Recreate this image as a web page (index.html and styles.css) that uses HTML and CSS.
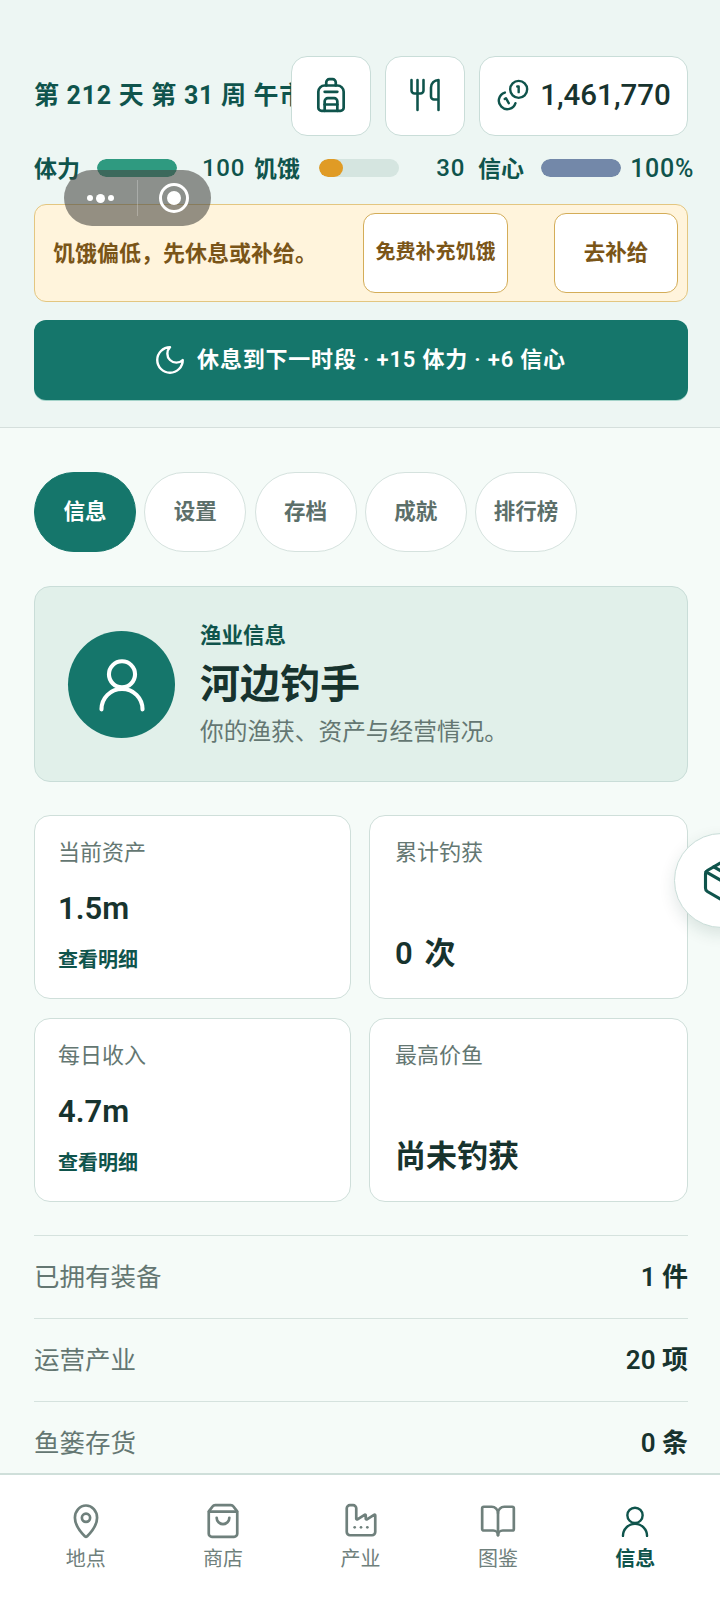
FILE: index.html
```html
<!DOCTYPE html>
<html lang="zh-CN">
<head>
  <meta charset="UTF-8" />
  <meta name="viewport" content="width=device-width, initial-scale=1.0"/>
  <title>河边钓手</title>
  <link rel="stylesheet" href="styles.css">
</head>
<body>
  <div class="app">
    <header class="top">
      <div class="top-row">
        <div class="day-title">第 212 天 第 31 周 午市</div>
        <button class="icon-btn">
          <svg class="ico ico-38" viewBox="0 0 24 24"><path d="M4 10a4 4 0 0 1 4-4h8a4 4 0 0 1 4 4v10a2 2 0 0 1-2 2H6a2 2 0 0 1-2-2z"/><path d="M8 10h8"/><path d="M8 18h8"/><path d="M8 22v-6a2 2 0 0 1 2-2h4a2 2 0 0 1 2 2v6"/><path d="M9 6V4a2 2 0 0 1 2-2h2a2 2 0 0 1 2 2v2"/></svg>
        </button>
        <button class="icon-btn">
          <svg class="ico ico-36" viewBox="0 0 24 24"><path d="M3 2v7c0 1.1.9 2 2 2h4a2 2 0 0 0 2-2V2"/><path d="M7 2v20"/><path d="M21 15V2a5 5 0 0 0-5 5v6c0 1.1.9 2 2 2h3Zm0 0v7"/></svg>
        </button>
        <div class="money">
          <svg class="ico ico-34" viewBox="0 0 24 24"><path d="M13.744 17.736a6 6 0 1 1-7.48-7.48"/><path d="M15 6h1v4"/><path d="m6.134 14.768.866-.5 2 3.464"/><circle cx="16" cy="8" r="6"/></svg>
          <span>1,461,770</span>
        </div>
      </div>

      <div class="stats">
        <span class="stat-name">体力</span>
        <span class="bar"><i class="fill fill-green"></i></span>
        <span class="stat-num num-a">100</span>
        <span class="stat-name">饥饿</span>
        <span class="bar bar-b"><i class="fill fill-orange"></i></span>
        <span class="stat-num num-b">30</span>
        <span class="stat-name">信心</span>
        <span class="bar"><i class="fill fill-blue"></i></span>
        <span class="stat-num num-c">100%</span>
      </div>

      <div class="warn">
        <p>饥饿偏低，先休息或补给。</p>
        <button class="warn-btn warn-free">免费补充饥饿</button>
        <button class="warn-btn warn-go">去补给</button>
      </div>

      <button class="rest">
        <svg class="ico ico-34" viewBox="0 0 24 24"><path d="M12 3a6 6 0 0 0 9 9 9 9 0 1 1-9-9Z"/></svg>
        <span>休息到下一时段 · +15 体力 · +6 信心</span>
      </button>
    </header>

    <main class="content">
      <nav class="tabs">
        <button class="tab active">信息</button>
        <button class="tab">设置</button>
        <button class="tab">存档</button>
        <button class="tab">成就</button>
        <button class="tab">排行榜</button>
      </nav>

      <section class="hero">
        <div class="avatar">
          <svg class="ico ico-58" viewBox="0 0 24 24"><circle cx="12" cy="8" r="5.4"/><path d="M3.5 22.5a8.5 8.5 0 0 1 17 0"/></svg>
        </div>
        <div class="hero-text">
          <div class="hero-kicker">渔业信息</div>
          <h1>河边钓手</h1>
          <p>你的渔获、资产与经营情况。</p>
        </div>
      </section>

      <section class="cards">
        <div class="card">
          <div class="card-label">当前资产</div>
          <div class="card-value">1.5m</div>
          <a class="card-link">查看明细</a>
        </div>
        <div class="card">
          <div class="card-label">累计钓获</div>
          <div class="card-value push">0 次</div>
        </div>
        <div class="card">
          <div class="card-label">每日收入</div>
          <div class="card-value">4.7m</div>
          <a class="card-link">查看明细</a>
        </div>
        <div class="card">
          <div class="card-label">最高价鱼</div>
          <div class="card-value push">尚未钓获</div>
        </div>
      </section>

      <section class="list">
        <div class="list-row"><span>已拥有装备</span><b>1 件</b></div>
        <div class="list-row"><span>运营产业</span><b>20 项</b></div>
        <div class="list-row"><span>鱼篓存货</span><b>0 条</b></div>
      </section>
    </main>

    <footer class="tabbar">
      <a class="tabbar-item">
        <svg class="ico ico-38" viewBox="0 0 24 24"><path d="M19 10c0 4.993-4.8 10.193-6.4 11.799a1 1 0 0 1-1.2 0C9.8 20.193 5 14.993 5 10a7 7.8 0 0 1 14 0"/><circle cx="12" cy="10" r="2.6"/></svg>
        <span>地点</span>
      </a>
      <a class="tabbar-item">
        <svg class="ico ico-38" viewBox="0 0 24 24"><path d="M16 10a4 4 0 0 1-8 0"/><path d="M3.103 6.034h17.794"/><path d="M3.4 5.467a2 2 0 0 0-.4 1.2V20a2 2 0 0 0 2 2h14a2 2 0 0 0 2-2V6.667a2 2 0 0 0-.4-1.2l-2-2.667A2 2 0 0 0 17 2H7a2 2 0 0 0-1.6.8z"/></svg>
        <span>商店</span>
      </a>
      <a class="tabbar-item">
        <svg class="ico ico-38" viewBox="0 0 24 24"><path d="M12 16h.01"/><path d="M16 16h.01"/><path d="M3 19a2 2 0 0 0 2 2h14a2 2 0 0 0 2-2V8.5a.5.5 0 0 0-.769-.422l-4.462 2.844A.5.5 0 0 1 15 10.5v-2a.5.5 0 0 0-.769-.422L9.77 10.922A.5.5 0 0 1 9 10.5V4a2 2 0 0 0-2-2H5a2 2 0 0 0-2 2z"/><path d="M8 16h.01"/></svg>
        <span>产业</span>
      </a>
      <a class="tabbar-item">
        <svg class="ico ico-38" viewBox="0 0 24 24"><path d="M12 7v14"/><path d="M3 18a1 1 0 0 1-1-1V4a1 1 0 0 1 1-1h5a4 4 0 0 1 4 4 4 4 0 0 1 4-4h5a1 1 0 0 1 1 1v13a1 1 0 0 1-1 1h-6a3 3 0 0 0-3 3 3 3 0 0 0-3-3z"/></svg>
        <span>图鉴</span>
      </a>
      <a class="tabbar-item current">
        <span class="user-box"><svg class="ico ico-34" viewBox="0 0 24 24"><circle cx="12" cy="8" r="5.4"/><path d="M3.5 22.5a8.5 8.5 0 0 1 17 0"/></svg></span>
        <span>信息</span>
      </a>
    </footer>

    <!-- floating bits that sit over the page -->
    <div class="capsule">
      <span class="dots"><i></i><i class="big"></i><i></i></span>
      <span class="capsule-line"></span>
      <span class="target"><i></i></span>
    </div>
    <button class="fab">
      <svg class="ico ico-44" viewBox="0 0 24 24"><path d="M11 21.73a2 2 0 0 0 2 0l7-4A2 2 0 0 0 21 16V8a2 2 0 0 0-1-1.73l-7-4a2 2 0 0 0-2 0l-7 4A2 2 0 0 0 3 8v8a2 2 0 0 0 1 1.73z"/><path d="M12 22V12"/><path d="M3.29 7 12 12l8.71-5"/><path d="m7.5 4.27 9 5.15"/></svg>
    </button>
  </div>
</body>
</html>
```

FILE: styles.css
```css
* {
  box-sizing: border-box;
}

body {
  margin: 0;
  font-family: Roboto, "Noto Sans CJK SC", sans-serif;
  color: #17332e;
}

button {
  font-family: inherit;
  padding: 0;
  cursor: pointer;
}

.app {
  position: relative;
  width: 720px;
  height: 1600px;
  overflow: hidden;
  display: flex;
  flex-direction: column;
  background-color: #f5fbf8;
}

.ico {
  fill: none;
  stroke: currentColor;
  stroke-width: 1.7;
  stroke-linecap: round;
  stroke-linejoin: round;
  flex: none;
}

.ico-34 { width: 34px; height: 34px; }
.ico-36 { width: 36px; height: 36px; }
.ico-38 { width: 38px; height: 38px; }
.ico-44 { width: 44px; height: 44px; }
.ico-58 { width: 58px; height: 58px; }

/* top block */
.top {
  flex: none;
  height: 428px;
  padding: 56px 32px 0 34px;
  background-color: #edf6f3;
  border-bottom: 1px solid #d5dfdc;
}

.top-row {
  display: flex;
  align-items: center;
  gap: 14px;
}

.day-title {
  flex: 1;
  min-width: 0;
  margin-right: -14px;
  padding-bottom: 6px;
  white-space: nowrap;
  overflow: hidden;
  font-size: 25px;
  font-weight: 700;
  letter-spacing: 0.7px;
  color: #0f544c;
}

.icon-btn,
.money {
  height: 80px;
  padding-bottom: 2px;
  background-color: #fff;
  border: 1px solid #c9ddd8;
  border-radius: 16px;
  color: #0f544c;
  display: flex;
  align-items: center;
  justify-content: center;
}

.icon-btn {
  width: 80px;
  flex: none;
}

.money {
  width: 209px;
  flex: none;
  gap: 10px;
}

.money span {
  font-size: 29.5px;
  font-weight: 500;
  color: #17332e;
}

.stats {
  display: flex;
  align-items: center;
  height: 24px;
  margin-top: 20px;
  white-space: nowrap;
  font-size: 23px;
  font-weight: 600;
  color: #0f544c;
}

.stat-name {
  margin-top: -2px;
}

.bar {
  flex: none;
  display: block;
  width: 80px;
  height: 18px;
  margin-left: 17px;
  border-radius: 9px;
  background-color: #d5e5e0;
  overflow: hidden;
}

.bar-b {
  margin-left: 19px;
}

.fill {
  display: block;
  height: 100%;
  border-radius: 9px;
}

.fill-green { width: 100%; background-color: #2f9a80; }
.fill-orange { width: 30%; background-color: #e09b25; }
.fill-blue { width: 100%; background-color: #7388a9; }

.stat-num {
  flex: none;
  font-size: 24px;
  font-weight: 500;
  letter-spacing: 0.7px;
  text-align: right;
}

.num-a { width: 68px; margin-right: 9px; }
.num-b { width: 66px; margin-right: 13px; }
.num-c { width: 73px; font-size: 25px; }

.warn {
  display: flex;
  align-items: center;
  height: 98px;
  margin-top: 24px;
  padding: 0 9px 0 18px;
  background-color: #fff4dc;
  border: 1px solid #e3c680;
  border-radius: 12px;
}

.warn p {
  flex: 1;
  margin: 0 0 5px;
  font-size: 22px;
  font-weight: 700;
  color: #7a5518;
}

.warn-btn {
  flex: none;
  height: 80px;
  padding-bottom: 5px;
  background-color: #fff;
  border: 1px solid #d4ad58;
  border-radius: 12px;
  font-size: 20px;
  font-weight: 700;
  color: #7a5518;
}

.warn-free { width: 145px; margin-right: 46px; }
.warn-go { width: 124px; font-size: 21.5px; }

.rest {
  display: flex;
  align-items: center;
  justify-content: center;
  gap: 10px;
  width: 100%;
  height: 80px;
  margin-top: 18px;
  padding-right: 3px;
  background-color: #15766b;
  border: 0;
  border-radius: 12px;
  box-shadow: 0 1px 0 #a3d3c9;
  color: #fff;
  font-size: 22px;
  font-weight: 600;
  letter-spacing: 0.8px;
}

.rest span {
  padding-bottom: 6px;
}

/* scrolling part */
.content {
  flex: 1;
  min-height: 0;
  overflow: hidden;
  padding: 44px 32px 0 34px;
}

.tabs {
  display: flex;
  gap: 8.25px;
}

.tab {
  width: 102px;
  height: 80px;
  padding-bottom: 6px;
  background-color: #fff;
  border: 1px solid #d5e2de;
  border-radius: 40px;
  font-size: 21.5px;
  font-weight: 600;
  color: #5c6f6a;
}

.tab.active {
  background-color: #15766b;
  border-color: #15766b;
  color: #fff;
}

.hero {
  display: flex;
  align-items: center;
  height: 196px;
  margin-top: 34px;
  padding-left: 33px;
  gap: 25px;
  background-color: #e1f0ea;
  border: 1px solid #c9ddd8;
  border-radius: 16px;
}

.avatar {
  flex: none;
  width: 107px;
  height: 107px;
  border-radius: 50%;
  background-color: #15766b;
  color: #fff;
  display: flex;
  align-items: center;
  justify-content: center;
}

.hero-kicker {
  font-size: 21.5px;
  font-weight: 600;
  line-height: 30px;
  color: #0f544c;
}

.hero h1 {
  margin: 7px 0 4px;
  font-size: 40px;
  font-weight: 600;
  line-height: 54px;
  color: #17332e;
}

.hero p {
  margin: 0;
  font-size: 23.7px;
  line-height: 32px;
  color: #647772;
}

.cards {
  display: grid;
  grid-template-columns: 317px 319px;
  grid-template-rows: 184px 184px;
  column-gap: 18px;
  row-gap: 19px;
  margin-top: 33px;
}

.card {
  display: flex;
  flex-direction: column;
  padding: 22px 24px 0 23px;
  background-color: #fff;
  border: 1px solid #cfdfda;
  border-radius: 16px;
}

.card:nth-child(even) {
  padding-left: 25px;
}

.card-label {
  font-size: 22px;
  line-height: 30px;
  color: #647772;
}

.card-value {
  margin-top: 18px;
  font-size: 31px;
  font-weight: 600;
  line-height: 46px;
  color: #17332e;
}

.card-value.push {
  margin-top: 52px;
  line-height: 68px;
  word-spacing: 4px;
}

.card-link {
  margin-top: 14px;
  font-size: 20px;
  font-weight: 700;
  line-height: 28px;
  color: #0f544c;
}

.list {
  margin-top: 33px;
}

.list-row {
  display: flex;
  align-items: center;
  justify-content: space-between;
  height: 83px;
  padding-bottom: 6px;
  border-top: 1px solid #d5e2de;
  font-size: 25.5px;
  color: #647772;
}

.list-row b {
  font-size: 26px;
  font-weight: 600;
  color: #17332e;
}

.tabbar {
  flex: none;
  display: flex;
  height: 127px;
  padding: 27px 16px 0 17px;
  background-color: #fff;
  border-top: 2px solid #cfdfda;
}

.tabbar-item {
  flex: 1;
  display: flex;
  flex-direction: column;
  align-items: center;
  gap: 4px;
  font-size: 20px;
  line-height: 30px;
  color: #6f807c;
}

.tabbar-item.current {
  color: #0f544c;
  font-weight: 700;
}

.user-box {
  height: 38px;
  display: flex;
  align-items: center;
}

/* overlays */
.capsule {
  position: absolute;
  left: 64px;
  top: 170px;
  width: 147px;
  height: 56px;
  display: flex;
  align-items: center;
  border-radius: 28px;
  background-color: rgba(70, 70, 66, 0.58);
}

.dots {
  width: 73px;
  display: flex;
  justify-content: center;
  align-items: center;
  gap: 3px;
}

.dots i {
  width: 6px;
  height: 6px;
  border-radius: 50%;
  background-color: #fff;
}

.dots i.big {
  width: 9px;
  height: 9px;
}

.capsule-line {
  width: 1px;
  height: 36px;
  background-color: rgba(255, 255, 255, 0.25);
}

.target {
  width: 30px;
  height: 30px;
  margin-left: 21px;
  border: 3px solid #fff;
  border-radius: 50%;
  display: flex;
  align-items: center;
  justify-content: center;
}

.target i {
  width: 14px;
  height: 14px;
  border-radius: 50%;
  background-color: #fff;
}

.fab {
  position: absolute;
  left: 674px;
  top: 833px;
  width: 95px;
  height: 95px;
  display: flex;
  align-items: center;
  padding-left: 25px;
  background-color: #fff;
  border: 1px solid #c9ddd8;
  border-radius: 50%;
  box-shadow: 0 6px 16px rgba(20, 60, 50, 0.12);
  color: #0f544c;
}
```
